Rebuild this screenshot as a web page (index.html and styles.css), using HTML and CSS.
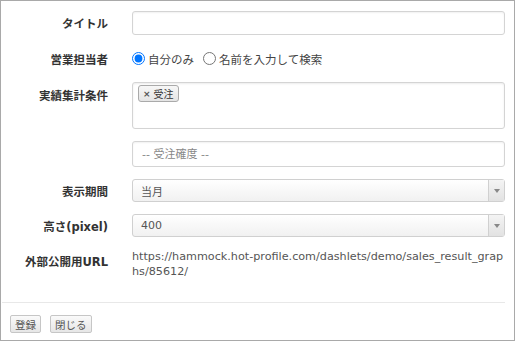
FILE: index.html
```html
<!DOCTYPE html>
<html lang="ja">
<head>
    <meta charset="UTF-8">
    <title>ダッシュレット設定</title>
    <link rel="stylesheet" href="styles.css">
</head>
<body>
<div class="dialog">
    <form class="settings">
        <div class="row">
            <label class="label">タイトル</label>
            <input type="text" class="text-input title-input">
        </div>
        <div class="row radio-row">
            <span class="label">営業担当者</span>
            <div class="radios">
                <label class="radio"><input type="radio" name="owner" checked>自分のみ</label>
                <label class="radio"><input type="radio" name="owner">名前を入力して検索</label>
            </div>
        </div>
        <div class="row">
            <span class="label label-top">実績集計条件</span>
            <div class="multi">
                <span class="tag"><span class="tag-x">×</span>受注</span>
            </div>
        </div>
        <div class="row">
            <span class="label"></span>
            <input type="text" class="text-input prob-input" placeholder="-- 受注確度 --">
        </div>
        <div class="row">
            <span class="label">表示期間</span>
            <div class="select"><span class="select-value">当月</span><span class="select-arrow"></span></div>
        </div>
        <div class="row">
            <span class="label">高さ(pixel)</span>
            <div class="select"><span class="select-value">400</span><span class="select-arrow"></span></div>
        </div>
        <div class="row url-row">
            <span class="label label-url">外部公開用URL</span>
            <div class="url">https://hammock.hot-profile.com/dashlets/demo/sales_result_graphs/85612/</div>
        </div>
    </form>
    <div class="footer">
        <button type="button" class="btn">登録</button>
        <button type="button" class="btn">閉じる</button>
    </div>
</div>
</body>
</html>
```

FILE: styles.css
```css
body {
    margin: 0;
    background-color: #fff;
    font-family: "DejaVu Sans", "Noto Sans CJK JP", sans-serif;
    font-size: 11px;
    color: #555;
}

.dialog {
    width: 513px;
    height: 339px;
    border: 1px solid #a9a9a9;
    display: flex;
    flex-direction: column;
}

.settings {
    display: flex;
    flex-direction: column;
    gap: 12px;
    padding: 10px 9px 0 10px;
    margin: 0;
}

.row {
    display: grid;
    grid-template-columns: 97px 1fr;
    column-gap: 24px;
    align-items: center;
}

.label {
    text-align: right;
    font-weight: bold;
    color: #333;
    font-size: 11.5px;
}

.label-top {
    align-self: start;
    padding-top: 5px;
}

.label-url {
    align-self: start;
    padding-top: 4px;
}

.text-input {
    box-sizing: border-box;
    width: 100%;
    margin: 0;
    border: 1px solid #d4d4d4;
    border-radius: 3px;
    box-shadow: inset 0 1px 2px rgba(0, 0, 0, 0.06);
    font-family: inherit;
    font-size: 11px;
    color: #555;
    padding: 0 9px;
    outline: none;
}

.title-input {
    height: 24px;
}

.prob-input {
    height: 26px;
}

.prob-input::placeholder {
    color: #888;
}

.radio-row {
    height: 23px;
}

.radios {
    display: flex;
    gap: 9px;
}

.radio {
    display: flex;
    align-items: center;
    font-size: 11.5px;
    color: #444;
}

.radio input {
    margin: 0 3px 0 0;
    width: 13px;
    height: 13px;
}

.multi {
    box-sizing: border-box;
    height: 47px;
    border: 1px solid #d4d4d4;
    border-radius: 3px;
    box-shadow: inset 0 1px 2px rgba(0, 0, 0, 0.08);
    padding: 2px 5px;
}

.tag {
    display: inline-flex;
    align-items: center;
    box-sizing: border-box;
    height: 17px;
    padding: 0 4px;
    border: 1px solid #aaa;
    border-radius: 3px;
    background: linear-gradient(#f7f7f7, #e4e4e4);
    color: #333;
    font-size: 10px;
}

.tag-x {
    font-weight: bold;
    color: #555;
    margin-right: 3px;
    font-size: 9px;
}

.select {
    box-sizing: border-box;
    height: 23px;
    display: flex;
    border: 1px solid #d0d0d0;
    border-radius: 3px;
    background: linear-gradient(#fff, #f1f1f1);
}

.select-value {
    flex: 1;
    align-self: center;
    padding-left: 8px;
    color: #555;
}

.select-arrow {
    width: 15px;
    border-left: 1px solid #d0d0d0;
    background: linear-gradient(#f4f4f4, #e2e2e2);
    position: relative;
}

.select-arrow::after {
    content: "";
    position: absolute;
    left: 5px;
    top: 9px;
    border-left: 3px solid transparent;
    border-right: 3px solid transparent;
    border-top: 4px solid #888;
}

.url {
    font-size: 11.2px;
    line-height: 15px;
    color: #555;
    word-break: break-all;
}

.footer {
    margin-top: auto;
    margin-left: 1px;
    margin-right: 9px;
    border-top: 1px solid #e8e8e8;
    padding: 12px 8px 7px 8px;
    display: flex;
    gap: 9px;
}

.btn {
    font-family: inherit;
    font-size: 10.5px;
    color: #555;
    height: 18px;
    padding: 0 4px;
    border: 1px solid #c6c6c6;
    border-radius: 2px;
    background: linear-gradient(#fafafa, #e6e6e6);
}
```
